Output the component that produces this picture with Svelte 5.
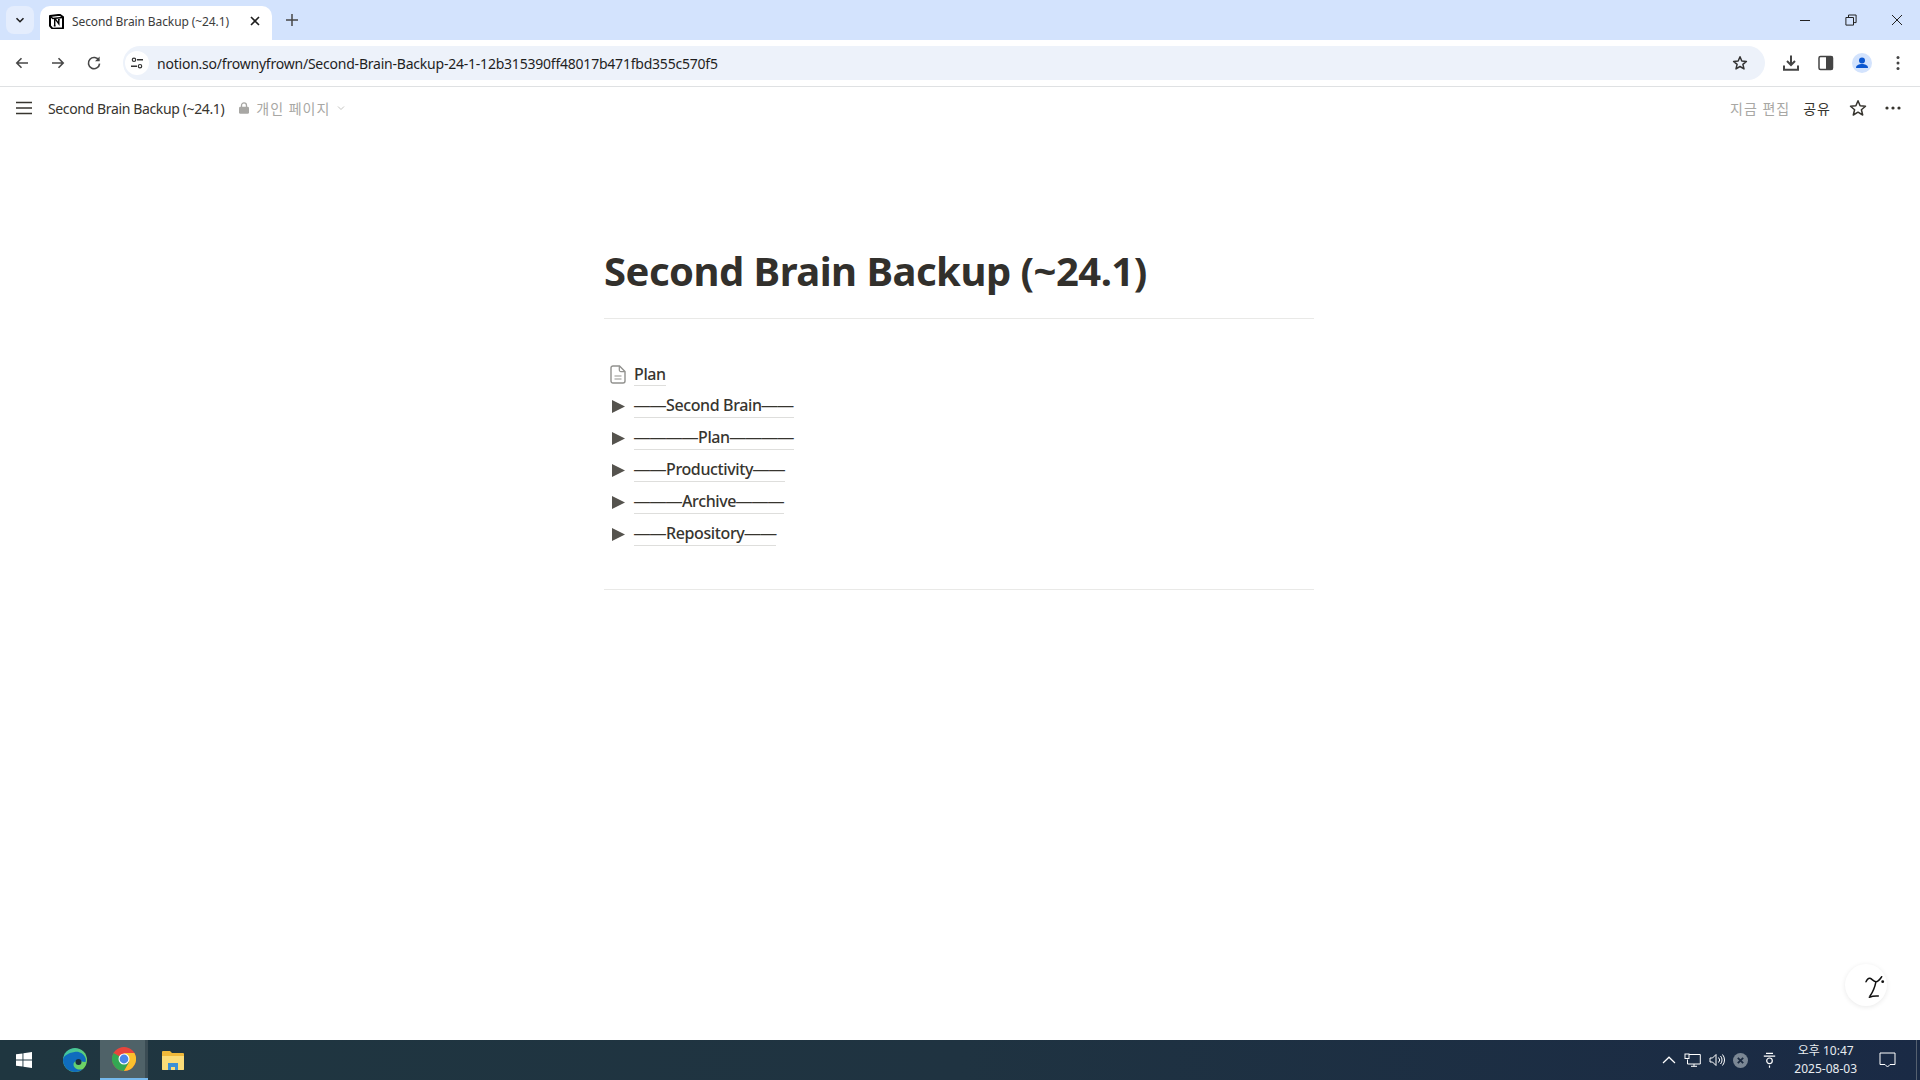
<script>
    const rows = [
        { name: 'Second Brain', dashes: '——' },
        { name: 'Plan', dashes: '————' },
        { name: 'Productivity', dashes: '——' },
        { name: 'Archive', dashes: '———' },
        { name: 'Repository', dashes: '——' }
    ];
</script>

<div class="screen">
    <header class="tabstrip">
        <div class="tabsearch">
            <svg width="12" height="12" viewBox="0 0 12 12"><path d="M2.5 4.2 6 7.7l3.5-3.5" fill="none" stroke="#1f1f1f" stroke-width="1.6" /></svg>
        </div>
        <div class="tab">
            <svg class="favicon" width="15" height="15" viewBox="0 0 15 15">
                <path d="M1 2 10.8.8 14 3v11.2L3.6 14.8 1 11.8z" fill="#fff" stroke="#000" stroke-width="2" stroke-linejoin="round" />
                <path d="M1.5 2.500 3.800 4.500 13.600 3.600" fill="none" stroke="#000" stroke-width="1.5" />
                <path d="M5 5.600h1.800l3 4.200V5.600M5.700 5.600v6.200M4.800 11.800h1.800M9 5.600h1.800" fill="none" stroke="#000" stroke-width="1.4" />
            </svg>
            <span class="tabtitle">Second Brain Backup (~24.1)</span>
            <svg class="tabclose" width="10" height="10" viewBox="0 0 10 10"><path d="M1 1l8 8M9 1 1 9" stroke="#1f1f1f" stroke-width="1.6" /></svg>
        </div>
        <svg class="newtab" width="14" height="14" viewBox="0 0 14 14"><path d="M7 1v12M1 7h12" stroke="#474747" stroke-width="1.5" /></svg>
        <div class="winbtns">
            <svg width="12" height="12" viewBox="0 0 12 12"><path d="M1 6.5h10" stroke="#222" stroke-width="1" /></svg>
            <svg width="12" height="12" viewBox="0 0 12 12"><path d="M.9 3.5h7.6v7.6H.9zM3.5 3.3V1h7.6v7.6H8.7" fill="none" stroke="#222" stroke-width="1" /></svg>
            <svg width="12" height="12" viewBox="0 0 12 12"><path d="M1 1l10 10M11 1 1 11" stroke="#222" stroke-width="1" /></svg>
        </div>
    </header>

    <nav class="toolbar">
        <svg class="navicon" width="16" height="16" viewBox="0 0 16 16"><path d="M14 8H3M7.500 3.200 2.800 8l4.700 4.800" fill="none" stroke="#474747" stroke-width="1.6" /></svg>
        <svg class="navicon" width="16" height="16" viewBox="0 0 16 16"><path d="M2 8h11M8.500 3.200 13.200 8l-4.700 4.800" fill="none" stroke="#474747" stroke-width="1.6" /></svg>
        <svg class="navicon" width="16" height="16" viewBox="0 0 16 16"><path d="M13 5.500A5.600 5.600 0 1 0 13.600 8.600" fill="none" stroke="#474747" stroke-width="1.6" /><path d="M13.600 1.600v4.600H9z" fill="#474747" /></svg>
        <div class="omnibox">
            <div class="siteinfo">
                <svg width="14" height="14" viewBox="0 0 14 14"><circle cx="4" cy="3.8" r="1.7" fill="none" stroke="#333" stroke-width="1.2" /><path d="M7 3.800h6M1 10.200h6" stroke="#333" stroke-width="1.4" /><circle cx="10" cy="10.2" r="1.7" fill="none" stroke="#333" stroke-width="1.2" /></svg>
            </div>
            <span class="url">notion.so/frownyfrown/Second-Brain-Backup-24-1-12b315390ff48017b471fbd355c570f5</span>
            <svg width="16" height="16" viewBox="0 0 16 16"><path d="M8 1.800 9.800 6l4.600.4-3.500 3 1.100 4.500L8 11.500l-4 2.400 1.100-4.500-3.500-3L6.200 6z" fill="none" stroke="#333" stroke-width="1.5" stroke-linejoin="round" /></svg>
        </div>
        <div class="toolicons">
            <svg width="18" height="18" viewBox="0 0 18 18"><path d="M9 1.500v9M5 7l4 4 4-4" fill="none" stroke="#444" stroke-width="2" /><path d="M2 11.500v4.200h14v-4.200" fill="none" stroke="#444" stroke-width="2" /></svg>
            <svg width="16" height="16" viewBox="0 0 16 16"><rect x="1" y="1.5" width="13.5" height="13" rx="1.5" fill="#fff" stroke="#444" stroke-width="1.5" /><rect x="8" y="1.5" width="6.5" height="13" fill="#444" /></svg>
            <svg width="20" height="20" viewBox="0 0 20 20"><circle cx="10" cy="10" r="10" fill="#d3e3fd" /><circle cx="10" cy="7.6" r="3" fill="#0b57d0" /><path d="M4 15c0-3 3-4 6-4s6 1 6 4z" fill="#0b57d0" /></svg>
            <svg class="kebab" width="4" height="16" viewBox="0 0 4 16"><circle cx="2" cy="2.4" r="1.5" fill="#444" /><circle cx="2" cy="8" r="1.5" fill="#444" /><circle cx="2" cy="13.6" r="1.5" fill="#444" /></svg>
        </div>
    </nav>

    <div class="topbar">
        <svg class="burger" width="18" height="14" viewBox="0 0 18 14"><path d="M1 1.500h16M1 7h16M1 12.500h16" stroke="#37352f" stroke-width="1.6" /></svg>
        <span class="crumb">Second Brain Backup (~24.1)</span>
        <svg class="lock" width="10" height="12" viewBox="0 0 10 12"><path d="M2.500 5V3.400a2.500 2.500 0 0 1 5 0V5" fill="none" stroke="#a8a7a4" stroke-width="1.3" /><rect y="4.8" width="10" height="7" rx="1.4" fill="#a8a7a4" /></svg>
        <span class="workspace">개인 페이지</span>
        <svg width="8" height="8" viewBox="0 0 8 8"><path d="M1 2.500 4 5.500l3-3" fill="none" stroke="#c4c4c2" stroke-width="1" /></svg>
        <div class="actions">
            <span class="edit">지금 편집</span>
            <span class="share">공유</span>
            <svg width="18" height="18" viewBox="0 0 18 18"><path d="M9 1.800 11.100 6.800l5.400.4-4.100 3.500 1.300 5.300L9 13.200 4.300 16l1.300-5.300L1.500 7.200l5.400-.4z" fill="none" stroke="#37352f" stroke-width="1.5" stroke-linejoin="round" /></svg>
            <svg width="16" height="4" viewBox="0 0 16 4"><circle cx="2" cy="2" r="1.6" fill="#37352f" /><circle cx="8" cy="2" r="1.6" fill="#37352f" /><circle cx="14" cy="2" r="1.6" fill="#37352f" /></svg>
        </div>
    </div>

    <main class="page">
        <article class="doc">
            <h1>Second Brain Backup (~24.1)</h1>
            <hr />
            <ul class="links">
                <li>
                    <svg class="pageicon" width="16" height="19" viewBox="0 0 16 19">
                        <path d="M3 1h6.500L15 6.500V16a2 2 0 0 1-2 2H3a2 2 0 0 1-2-2V3a2 2 0 0 1 2-2z" fill="none" stroke="#91918e" stroke-width="1.4" />
                        <path d="M9.300 1.200V5a1.600 1.600 0 0 0 1.600 1.600h3.900M4.500 11h7M4.500 14h7" fill="none" stroke="#91918e" stroke-width="1.2" />
                    </svg>
                    <span class="link">Plan</span>
                </li>
                {#each rows as row}
                    <li>
                        <svg class="caret" width="13" height="13" viewBox="0 0 13 13"><path d="M0 0 13 6.500 0 13z" fill="#55534e" /></svg>
                        <span class="link"><span class="dash">{row.dashes}</span>{row.name}<span class="dash">{row.dashes}</span></span>
                    </li>
                {/each}
            </ul>
            <hr />
        </article>
        <button class="fab" aria-label="AI">
            <svg width="24" height="24" viewBox="0 0 24 24">
                <path d="M2 6.700C3 4.500 4.500 3 6 3.300c2 .4 3.500 3.400 6 3.400 2.500 0 4-2.500 5.700-5M12 6.700C11 11.500 9 17 6 21M5.300 22.300c3-1.300 6-1.500 9-1.300" fill="none" stroke="#111" stroke-width="1.5" stroke-linecap="round" />
                <circle cx="18.700" cy="6.700" r="1.400" fill="#111" />
            </svg>
        </button>
    </main>

    <footer class="taskbar">
        <div class="startbtn">
            <svg width="16" height="16" viewBox="0 0 16 16"><path d="M0 2.300 6.500 1.400v6.200H0zM7.400 1.300 16 0v7.600H7.400zM0 8.400h6.500v6.200L0 13.700zM7.400 8.400H16V16l-8.600-1.300z" fill="#fff" /></svg>
        </div>
        <div class="appbtn">
            <svg width="24" height="24" viewBox="0 0 24 24">
                <defs>
                    <linearGradient id="edgeg" x1="0" y1="0" x2="1" y2="1"><stop offset="0" stop-color="#35c1b0" /><stop offset="1" stop-color="#7ed84f" /></linearGradient>
                </defs>
                <circle cx="12" cy="12" r="12" fill="url(#edgeg)" />
                <path d="M0 12c0 7 6 12 12 12 3.500 0 6-1 8-3-5 1.500-9-.5-9.500-4-.3-2 1-3.500 3-4 3-.8 4 .5 9 1 .4-1.500.5-3 0-4-2-5-7-7-11-6C5 5 0 8 0 12z" fill="#0f6cbd" />
                <circle cx="15.500" cy="14" r="3" fill="#1c2f3c" />
            </svg>
        </div>
        <div class="appbtn active">
            <svg width="24" height="24" viewBox="0 0 24 24">
                <circle cx="12" cy="12" r="12" fill="#e8453c" />
                <path d="M12 12 1.600 6A12 12 0 0 0 12 24l5.200-9z" fill="#34a853" />
                <path d="M12 6h10.400A12 12 0 0 1 12 24l5.200-9z" fill="#fbc02d" />
                <circle cx="12" cy="12" r="5.500" fill="#fff" />
                <circle cx="12" cy="12" r="4.400" fill="#4a86e8" />
            </svg>
        </div>
        <div class="appbtn">
            <svg width="24" height="22" viewBox="0 0 24 22">
                <path d="M1 3a1 1 0 0 1 1-1h7l2 2h11a1 1 0 0 1 1 1v15a1 1 0 0 1-1 1H2a1 1 0 0 1-1-1z" fill="#f0b93a" />
                <path d="M1 7h22v13a1 1 0 0 1-1 1H2a1 1 0 0 1-1-1z" fill="#fbdc78" />
                <path d="M7 14h10v7h-3v-3h-4v3H7z" fill="#3a8fd6" />
            </svg>
        </div>
        <div class="tray">
            <svg width="14" height="8" viewBox="0 0 14 8"><path d="M1 7 7 1.200 13 7" fill="none" stroke="#fff" stroke-width="1.2" /></svg>
            <svg width="17" height="14" viewBox="0 0 17 14"><path d="M5 1.500h11.300v9.500H3.500V6.500M7 13.300h6M10 11v2.300" fill="none" stroke="#fff" stroke-width="1" /><rect x="1" y="1" width="4" height="4.500" fill="none" stroke="#fff" stroke-width="1" /></svg>
            <svg width="17" height="14" viewBox="0 0 17 14"><path d="M1 5h2.500L7 1.500v11L3.500 9H1zM9.500 4.500a3.500 3.500 0 0 1 0 5M11.500 3a6 6 0 0 1 0 8M13.500 1.500a8.500 8.500 0 0 1 0 11" fill="none" stroke="#fff" stroke-width="1" /></svg>
            <svg class="dnd" width="15" height="15" viewBox="0 0 15 15"><circle cx="7.500" cy="7.500" r="7.500" fill="#7b8794" /><path d="M4.800 4.800l5.400 5.400M10.200 4.800l-5.400 5.400" stroke="#1b2a40" stroke-width="1.8" /></svg>
            <span class="ime">
                <svg width="13" height="16" viewBox="0 0 13 16"><path d="M3 1.300h7M.8 4.200h11.400M6.500 13.500v2.200" stroke="#fff" stroke-width="1.2" /><circle cx="6.500" cy="8.800" r="2.800" fill="none" stroke="#fff" stroke-width="1.2" /></svg>
            </span>
            <div class="clock">
                <span>오후 10:47</span>
                <span>2025-08-03</span>
            </div>
            <svg class="notify" width="17" height="16" viewBox="0 0 17 16"><path d="M1 1h15v11.500h-5L8.500 15 6 12.500H1z" fill="none" stroke="#fff" stroke-width="1" /></svg>
            <span class="showdesk"></span>
        </div>
    </footer>
</div>

<style>
    :global(body) {
        margin: 0;
        background: #fff;
        overflow: hidden;
    }
    .screen {
        width: 1920px;
        height: 1080px;
        display: flex;
        flex-direction: column;
        font-family: 'Noto Sans', 'Noto Sans CJK KR', sans-serif;
        color: #37352f;
    }
    .tabstrip {
        height: 40px;
        flex: none;
        background: #d3e3fd;
        display: flex;
        align-items: center;
        padding-left: 6px;
        box-sizing: border-box;
    }
    .tabsearch {
        width: 28px;
        height: 28px;
        border-radius: 8px;
        background: #e4edfd;
        display: flex;
        align-items: center;
        justify-content: center;
        margin-top: -1px;
    }
    .tab {
        width: 232px;
        height: 34px;
        margin-top: 6px;
        margin-left: 6px;
        background: #fff;
        border-radius: 10px 10px 0 0;
        display: flex;
        align-items: center;
        padding: 0 9px;
        box-sizing: border-box;
    }
    .favicon {
        flex: none;
        margin-right: 8px;
        margin-top: -4px;
    }
    .tabtitle {
        flex: 1;
        font-size: 12px;
        color: #3c3c3c;
        letter-spacing: -0.1px;
        white-space: nowrap;
        margin-top: -4px;
    }
    .tabclose {
        margin: -4px 3px 0 0;
    }
    .newtab {
        margin-left: 13px;
        margin-top: -1px;
    }
    .winbtns {
        margin-left: auto;
        display: flex;
        gap: 34px;
        padding-right: 17px;
        margin-top: -1px;
    }
    .toolbar {
        height: 46px;
        flex: none;
        background: #fff;
        border-bottom: 1px solid #dfe1e3;
        border-radius: 8px 8px 0 0;
        display: flex;
        align-items: center;
        padding-left: 14px;
    }
    .navicon {
        margin-right: 20px;
        flex: none;
    }
    .navicon:nth-child(3) {
        margin-right: 21px;
    }
    .omnibox {
        width: 1642px;
        height: 34px;
        background: #edf2fa;
        border-radius: 17px;
        display: flex;
        align-items: center;
        padding: 0 17px 0 2px;
        box-sizing: border-box;
    }
    .siteinfo {
        width: 24px;
        height: 24px;
        background: #fff;
        border-radius: 50%;
        display: flex;
        align-items: center;
        justify-content: center;
        margin-right: 8px;
    }
    .url {
        flex: 1;
        font-size: 14px;
        color: #1f1f1f;
        letter-spacing: -0.22px;
        white-space: nowrap;
    }
    .toolicons {
        display: flex;
        align-items: center;
        margin-left: 17px;
        gap: 18px;
    }
    .kebab {
        margin-left: 6px;
    }
    .topbar {
        height: 43px;
        flex: none;
        display: flex;
        align-items: center;
        padding: 0 19px 2px 15px;
        box-sizing: border-box;
        font-size: 14px;
    }
    .burger {
        margin-right: 15px;
    }
    .crumb {
        margin: 1px 15px 0 0;
        color: #37352f;
        letter-spacing: -0.37px;
        white-space: nowrap;
    }
    .lock {
        margin-right: 7px;
    }
    .workspace {
        color: #a8a7a4;
        margin-right: 7px;
        letter-spacing: 1px;
    }
    .actions {
        margin-left: auto;
        display: flex;
        align-items: center;
        gap: 13px;
    }
    .edit {
        color: #a8a7a4;
        letter-spacing: 1px;
    }
    .share {
        color: #37352f;
        letter-spacing: 1px;
        margin-right: 5px;
    }
    .actions svg:last-child {
        margin-left: 5px;
    }
    .page {
        flex: 1;
        position: relative;
        min-height: 0;
    }
    .doc {
        width: 710px;
        margin-left: 604px;
        padding-top: 117px;
    }
    h1 {
        margin: 0;
        font-size: 40px;
        line-height: 48px;
        font-weight: 700;
        letter-spacing: -0.52px;
        color: #32302c;
        white-space: nowrap;
    }
    hr {
        border: 0;
        border-top: 1px solid #e9e9e7;
        margin: 0;
    }
    h1 + hr {
        margin-top: 23px;
    }
    .links {
        list-style: none;
        margin: 39px 0 0;
        padding: 0 0 39px;
    }
    li {
        height: 32px;
        display: flex;
        align-items: center;
        font-size: 16px;
    }
    .pageicon {
        margin-left: 6px;
        margin-right: 8px;
    }
    .caret {
        margin-left: 8px;
        margin-right: 9px;
    }
    .link {
        font-weight: 500;
        line-height: 22px;
        letter-spacing: -0.38px;
        border-bottom: 1px solid #dededc;
        white-space: nowrap;
    }
    .dash {
        font-family: 'Liberation Sans', sans-serif;
        font-weight: 400;
        letter-spacing: 0;
    }
    .fab {
        position: absolute;
        right: 33px;
        bottom: 34px;
        width: 42px;
        height: 42px;
        padding: 0;
        border: 0;
        border-radius: 50%;
        background: #fff;
        box-shadow: 0 1px 5px rgba(0, 0, 0, 0.09);
        display: flex;
        align-items: center;
        justify-content: center;
    }
    .fab svg {
        flex: none;
        margin-left: 20px;
        margin-top: 4px;
    }
    .taskbar {
        height: 40px;
        flex: none;
        background: linear-gradient(90deg, #1f3640 0%, #1f3341 50%, #1a2a45 100%);
        display: flex;
        align-items: center;
        color: #fff;
    }
    .startbtn {
        width: 50px;
        box-sizing: border-box;
        padding-right: 2px;
        display: flex;
        justify-content: center;
    }
    .appbtn {
        width: 50px;
        height: 40px;
        display: flex;
        align-items: center;
        justify-content: center;
        box-sizing: border-box;
    }
    .appbtn.active {
        width: 48px;
        background: #4f6268;
        border-bottom: 2px solid #76b9ed;
        box-shadow: inset -3px 0 #3a4c54;
    }
    .tray {
        margin-left: auto;
        display: flex;
        align-items: center;
        gap: 8px;
        font-size: 12px;
    }
    .dnd {
        margin-left: -1px;
    }
    .ime {
        margin-left: 7px;
        display: flex;
    }
    .clock {
        display: flex;
        flex-direction: column;
        align-items: center;
        line-height: 18px;
        margin: 0 8px 0 10px;
        color: #e8ecf0;
    }
    .notify {
        margin: 0 12px 0 6px;
    }
    .showdesk {
        width: 1px;
        height: 40px;
        background: #55606f;
        margin-right: 3px;
    }
</style>
